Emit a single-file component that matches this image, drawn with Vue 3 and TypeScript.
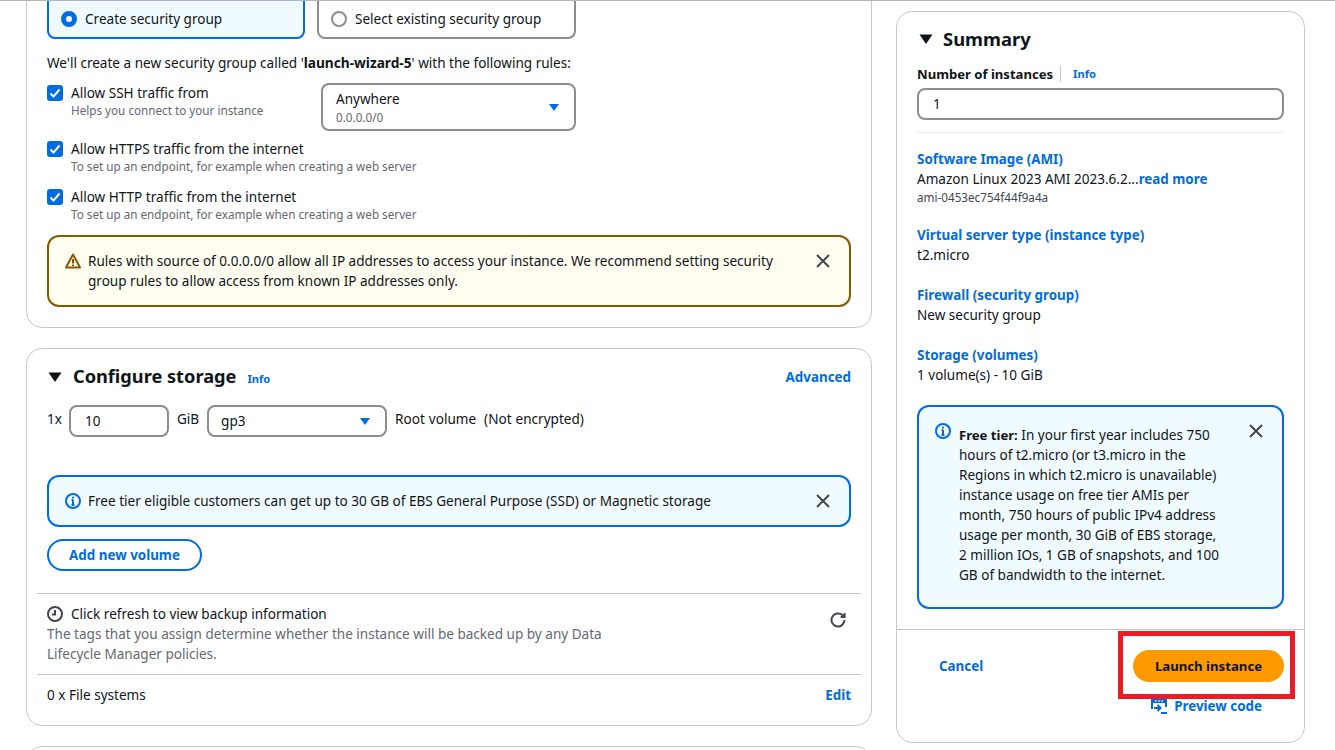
<script setup lang="ts">
interface Rule {
  label: string
  hint: string
}

interface SummaryItem {
  title: string
  value: string
}

const rules: Rule[] = [
  { label: 'Allow HTTPS traffic from the internet', hint: 'To set up an endpoint, for example when creating a web server' },
  { label: 'Allow HTTP traffic from the internet', hint: 'To set up an endpoint, for example when creating a web server' },
]

const summaryItems: SummaryItem[] = [
  { title: 'Virtual server type (instance type)', value: 't2.micro' },
  { title: 'Firewall (security group)', value: 'New security group' },
  { title: 'Storage (volumes)', value: '1 volume(s) - 10 GiB' },
]
</script>

<template>
  <div class="topline" />
  <div class="shell">
    <main class="main-col">
      <section class="card network">
        <div class="tiles">
          <div class="tile active">
            <span class="radio on" />
            <span>Create security group</span>
          </div>
          <div class="tile">
            <span class="radio" />
            <span>Select existing security group</span>
          </div>
        </div>

        <p class="intro">We'll create a new security group called '<b>launch-wizard-5</b>' with the following rules:</p>

        <div class="ssh-row">
          <div class="check ssh">
            <span class="box">
              <svg viewBox="0 0 16 16" width="16" height="16"><path d="M3.5 8.5l3 3 6-7" /></svg>
            </span>
            <div>
              <div class="check-label">Allow SSH traffic from</div>
              <div class="hint">Helps you connect to your instance</div>
            </div>
          </div>
          <div class="select tall">
            <div>
              <div>Anywhere</div>
              <div class="hint">0.0.0.0/0</div>
            </div>
            <svg class="caret" viewBox="0 0 16 16" width="16" height="16"><path d="M3 5h10l-5 7z" /></svg>
          </div>
        </div>

        <div v-for="rule in rules" :key="rule.label" class="check rule">
          <span class="box">
            <svg viewBox="0 0 16 16" width="16" height="16"><path d="M3.5 8.5l3 3 6-7" /></svg>
          </span>
          <div>
            <div class="check-label">{{ rule.label }}</div>
            <div class="hint">{{ rule.hint }}</div>
          </div>
        </div>

        <div class="alert warning">
          <svg class="alert-icon" viewBox="0 0 16 16" width="16" height="16">
            <path d="M8 1.5L1 14.5h14z" />
            <path d="M8 6v4.5M8 11.6v1.4" />
          </svg>
          <p>Rules with source of 0.0.0.0/0 allow all IP addresses to access your instance. We recommend setting security group rules to allow access from known IP addresses only.</p>
          <svg class="close" viewBox="0 0 16 16" width="16" height="16"><path d="M2 2l12 12M14 2L2 14" /></svg>
        </div>
      </section>

      <section class="card storage">
        <header class="storage-head">
          <svg class="tri" viewBox="0 0 16 16" width="16" height="16"><path d="M1.5 3.5h13L8 13z" /></svg>
          <h2>Configure storage</h2>
          <a class="info">Info</a>
          <a class="link advanced">Advanced</a>
        </header>

        <div class="volume-row">
          <span class="up times">1x</span>
          <div class="input small">10</div>
          <span class="up">GiB</span>
          <div class="select short">
            <span>gp3</span>
            <svg class="caret" viewBox="0 0 16 16" width="16" height="16"><path d="M3 5h10l-5 7z" /></svg>
          </div>
          <span class="up root">Root volume&nbsp; (Not encrypted)</span>
        </div>

        <div class="alert info-alert single">
          <svg class="alert-icon" viewBox="0 0 16 16" width="16" height="16">
            <circle cx="8" cy="8" r="7" />
            <path d="M8 7v5M6.5 12h3M6.5 7H8M8 3.8v1.6" />
          </svg>
          <p>Free tier eligible customers can get up to 30 GB of EBS General Purpose (SSD) or Magnetic storage</p>
          <svg class="close" viewBox="0 0 16 16" width="16" height="16"><path d="M2 2l12 12M14 2L2 14" /></svg>
        </div>

        <button class="outline-btn">Add new volume</button>

        <div class="backup">
          <div>
            <div class="backup-title">
              <svg class="clock" viewBox="0 0 16 16" width="16" height="16">
                <circle cx="8" cy="8" r="7" />
                <path d="M8 4v4.5H4.8" />
              </svg>
              <span>Click refresh to view backup information</span>
            </div>
            <p class="backup-text">The tags that you assign determine whether the instance will be backed up by any Data Lifecycle Manager policies.</p>
          </div>
          <svg class="refresh" viewBox="0 0 16 16" width="16" height="16">
            <path d="M14.5 8a6.5 6.5 0 1 1-2.2-4.9L14 4.6" />
            <path d="M14.6 1v4h-4" />
          </svg>
        </div>

        <div class="fs-row">
          <span>0 x File systems</span>
          <a class="link">Edit</a>
        </div>
      </section>

      <section class="card stub" />
    </main>

    <aside class="card summary">
      <div class="summary-body">
        <header class="summary-head">
          <svg class="tri" viewBox="0 0 16 16" width="16" height="16"><path d="M1.5 3.5h13L8 13z" /></svg>
          <h2>Summary</h2>
        </header>

        <div class="count-label">
          <b>Number of instances</b>
          <a class="info">Info</a>
        </div>
        <div class="input wide">1</div>
        <hr class="light">

        <div class="item first">
          <a class="link">Software Image (AMI)</a>
          <div>Amazon Linux 2023 AMI 2023.6.2...<a class="link">read more</a></div>
          <div class="ami">ami-0453ec754f44f9a4a</div>
        </div>
        <div v-for="item in summaryItems" :key="item.title" class="item">
          <a class="link">{{ item.title }}</a>
          <div>{{ item.value }}</div>
        </div>

        <div class="alert info-alert free">
          <svg class="alert-icon" viewBox="0 0 16 16" width="16" height="16">
            <circle cx="8" cy="8" r="7" />
            <path d="M8 7v5M6.5 12h3M6.5 7H8M8 3.8v1.6" />
          </svg>
          <p><b>Free tier:</b> In your first year includes 750 hours of t2.micro (or t3.micro in the Regions in which t2.micro is unavailable) instance usage on free tier AMIs per month, 750 hours of public IPv4 address usage per month, 30 GiB of EBS storage, 2 million IOs, 1 GB of snapshots, and 100 GB of bandwidth to the internet.</p>
          <svg class="close" viewBox="0 0 16 16" width="16" height="16"><path d="M2 2l12 12M14 2L2 14" /></svg>
        </div>
      </div>

      <footer class="summary-foot">
        <div class="actions">
          <a class="link cancel">Cancel</a>
          <button class="launch">Launch instance</button>
        </div>
        <a class="link preview">
          <svg viewBox="0 0 16 16" width="16" height="16">
            <path d="M1 11V2h14v7" />
            <path class="band" d="M1 3h14" />
            <path class="dots" d="M4 3h1.500M7.200 3h1.500M10.400 3h1.500" />
            <path d="M3 10h6M6.500 7l3 3-3 3" />
            <path d="M10 15h6" />
          </svg>
          <span>Preview code</span>
        </a>
        <div class="highlight" />
      </footer>
    </aside>
  </div>
</template>

<style>
html,
body {
  margin: 0;
  background: #fff;
  overflow: hidden;
}
</style>

<style scoped>
.topline {
  height: 1px;
  background: #b4b4bb;
}

.shell {
  display: flex;
  align-items: flex-start;
  gap: 24px;
  height: 749px;
  padding-left: 26px;
  overflow: hidden;
  box-sizing: border-box;
  font-family: "Noto Sans", "Open Sans", sans-serif;
  font-size: 13.55px;
  line-height: 20px;
  color: #0f141a;
}

b {
  font-size: 13.1px;
}

.intro b {
  font-size: 13.7px;
}

.main-col {
  flex: none;
  width: 846px;
  display: flex;
  flex-direction: column;
  gap: 20px;
  margin-top: -32px;
}

.card {
  box-sizing: border-box;
  background: #fff;
  border: 1px solid #c6c6cd;
  border-radius: 16px;
}

.network {
  height: 359px;
  padding: 19px 20px 0;
}

.tiles {
  display: flex;
  gap: 12px;
}

.tile {
  box-sizing: border-box;
  display: flex;
  align-items: center;
  gap: 8px;
  width: 259px;
  height: 50px;
  padding: 10px 12px 0;
  border: 2px solid #8c8c94;
  border-radius: 8px;
}

.tile.active {
  width: 258px;
  background: #f0fbff;
  border-color: #006ce0;
}

.radio {
  box-sizing: border-box;
  flex: none;
  width: 16px;
  height: 16px;
  border: 2px solid #8c8c94;
  border-radius: 50%;
  background: #fff;
}

.radio.on {
  border: 5px solid #006ce0;
}

.intro {
  margin: 14px 0 10px;
}

.ssh-row {
  display: flex;
  height: 48px;
  margin-bottom: 8px;
}

.check {
  display: flex;
  gap: 8px;
}

.check.ssh {
  width: 274px;
}

.rule {
  margin-bottom: 12px;
}

.box {
  flex: none;
  width: 16px;
  height: 16px;
  margin-top: 2px;
  border-radius: 3px;
  background: #006ce0;
}

.box svg {
  display: block;
  fill: none;
  stroke: #fff;
  stroke-width: 2;
}

.hint {
  font-size: 11.7px;
  line-height: 16px;
  color: #656871;
}

.check .hint {
  margin: -1px 0 1px;
}

.select {
  box-sizing: border-box;
  display: flex;
  align-items: center;
  justify-content: space-between;
  border: 2px solid #8c8c94;
  border-radius: 8px;
  background: #fff;
}

.select.tall {
  width: 255px;
  height: 48px;
  padding: 0 12px 0 13px;
}

.select.short {
  width: 180px;
  height: 32px;
  padding: 0 12px;
}

.caret {
  fill: #006ce0;
}

.alert {
  box-sizing: border-box;
  position: relative;
  display: flex;
  align-items: flex-start;
  border: 2px solid;
  border-radius: 12px;
}

.alert p {
  margin: 0;
}

.alert-icon {
  flex: none;
  fill: none;
  stroke-width: 2;
}

.close {
  position: absolute;
  fill: none;
  stroke: #424650;
  stroke-width: 2;
}

.warning {
  height: 72px;
  padding: 14px 62px 0 16px;
  background: #fffef0;
  border-color: #855900;
}

.warning .alert-icon {
  margin: 2px 7px 0 0;
  stroke: #855900;
  stroke-linejoin: round;
}

.warning .close,
.single .close {
  top: 16px;
  right: 18px;
}

.info-alert {
  background: #f0fbff;
  border-color: #006ce0;
}

.info-alert .alert-icon {
  stroke: #006ce0;
}

.storage {
  height: 378px;
  padding: 16px 20px 0;
}

.storage-head {
  display: flex;
  align-items: center;
  height: 24px;
}

.storage-head h2 {
  margin-top: -2px;
}

.storage-head .info {
  margin-top: 4px;
  margin-left: 11px;
}

.tri {
  flex: none;
  fill: #0f141a;
}

.storage-head h2,
.summary-head h2 {
  margin-left: 10px;
  margin-bottom: 0;
  font-size: 18.2px;
  line-height: 24px;
  font-weight: 700;
}

.summary-head h2 {
  margin-top: 0;
  font-size: 18.4px;
}

.info {
  margin-left: 12px;
  font-size: 11.2px;
  font-weight: 700;
  color: #006ce0;
}

.link {
  color: #006ce0;
  font-weight: 700;
  font-size: 13.4px;
}

.advanced {
  margin-left: auto;
}

.volume-row {
  display: flex;
  align-items: flex-start;
  gap: 8px;
  height: 32px;
  margin-top: 16px;
}

.up {
  line-height: 28px;
}

.root {
  word-spacing: 0.5px;
}

.times {
  margin-right: -1px;
}

.input {
  box-sizing: border-box;
  height: 32px;
  padding: 0 14px;
  border: 2px solid #8c8c94;
  border-radius: 8px;
  line-height: 28px;
}

.input.small {
  width: 100px;
}

.input.wide {
  width: 367px;
  margin-top: 4px;
}

.single {
  height: 52px;
  margin-top: 38px;
  padding: 14px 62px 0 16px;
}

.single .alert-icon {
  margin: 2px 7px 0 0;
}

.outline-btn {
  display: block;
  height: 32px;
  width: 155px;
  margin-top: 12px;
  padding: 0;
  font: inherit;
  font-size: 13.4px;
  font-weight: 700;
  color: #006ce0;
  background: #fff;
  border: 2px solid #006ce0;
  border-radius: 16px;
}

.backup {
  display: flex;
  justify-content: space-between;
  margin: 22px -10px 0;
  padding: 10px 15px 10px 10px;
  border-top: 1px solid #c6c6cd;
  border-bottom: 1px solid #c6c6cd;
}

.backup-title {
  display: flex;
  align-items: center;
  gap: 8px;
}

.clock {
  fill: none;
  stroke: #424650;
  stroke-width: 2;
}

.backup-text {
  width: 570px;
  margin: 0;
  color: #656871;
}

.refresh {
  margin-top: 8px;
  fill: none;
  stroke: #424650;
  stroke-width: 2;
}

.fs-row {
  display: flex;
  justify-content: space-between;
  margin-top: 10px;
}

.stub {
  height: 60px;
}

.summary {
  flex: none;
  width: 409px;
  height: 732px;
  margin-top: 10px;
  display: flex;
  flex-direction: column;
}

.summary-body {
  flex: none;
  height: 617px;
  padding: 15px 20px 0;
  box-sizing: border-box;
}

.summary-head {
  display: flex;
  align-items: center;
  height: 24px;
}

.summary-head .tri {
  margin-left: 1px;
}

.summary-head h2 {
  margin-left: 9px;
}

.count-label {
  display: flex;
  align-items: center;
  margin-top: 13px;
  height: 20px;
}

.count-label .info {
  margin-left: 7px;
  padding-left: 12px;
  border-left: 1px solid #c6c6cd;
  line-height: 16px;
}

.light {
  margin: 12px 0 16px;
  border: 0;
  border-top: 1px solid #ebebf0;
}

.item {
  margin-bottom: 20px;
}

.item > .link {
  display: block;
}

.ami {
  font-size: 11.7px;
  line-height: 16px;
  color: #424650;
}

.free {
  height: 204px;
  margin-top: 20px;
  padding: 18px 58px 0 16px;
}

.free .alert-icon {
  margin: -2px 8px 0 0;
}

.free .close {
  top: 16px;
  right: 18px;
}

.summary-foot {
  position: relative;
  flex: 1;
  border-top: 1px solid #c6c6cd;
  padding: 20px 20px 0;
}

.actions {
  display: flex;
  align-items: center;
  justify-content: space-between;
}

.cancel {
  margin-left: 22px;
}

.launch {
  width: 151px;
  height: 32px;
  padding: 0;
  font: inherit;
  font-size: 13.2px;
  font-weight: 700;
  color: #0f141a;
  background: #ff9900;
  border: 0;
  border-radius: 16px;
}

.preview {
  display: flex;
  justify-content: flex-end;
  align-items: center;
  gap: 7px;
  margin: 14px 22px 0 0;
}

.preview svg {
  fill: none;
  stroke: #006ce0;
  stroke-width: 2;
}

.preview .band {
  stroke-width: 4;
}

.preview .dots {
  stroke: #fff;
  stroke-width: 1.5;
}

.highlight {
  position: absolute;
  top: 1px;
  left: 221px;
  width: 177px;
  height: 68px;
  box-sizing: border-box;
  border: 5px solid #ed1c24;
}
</style>
